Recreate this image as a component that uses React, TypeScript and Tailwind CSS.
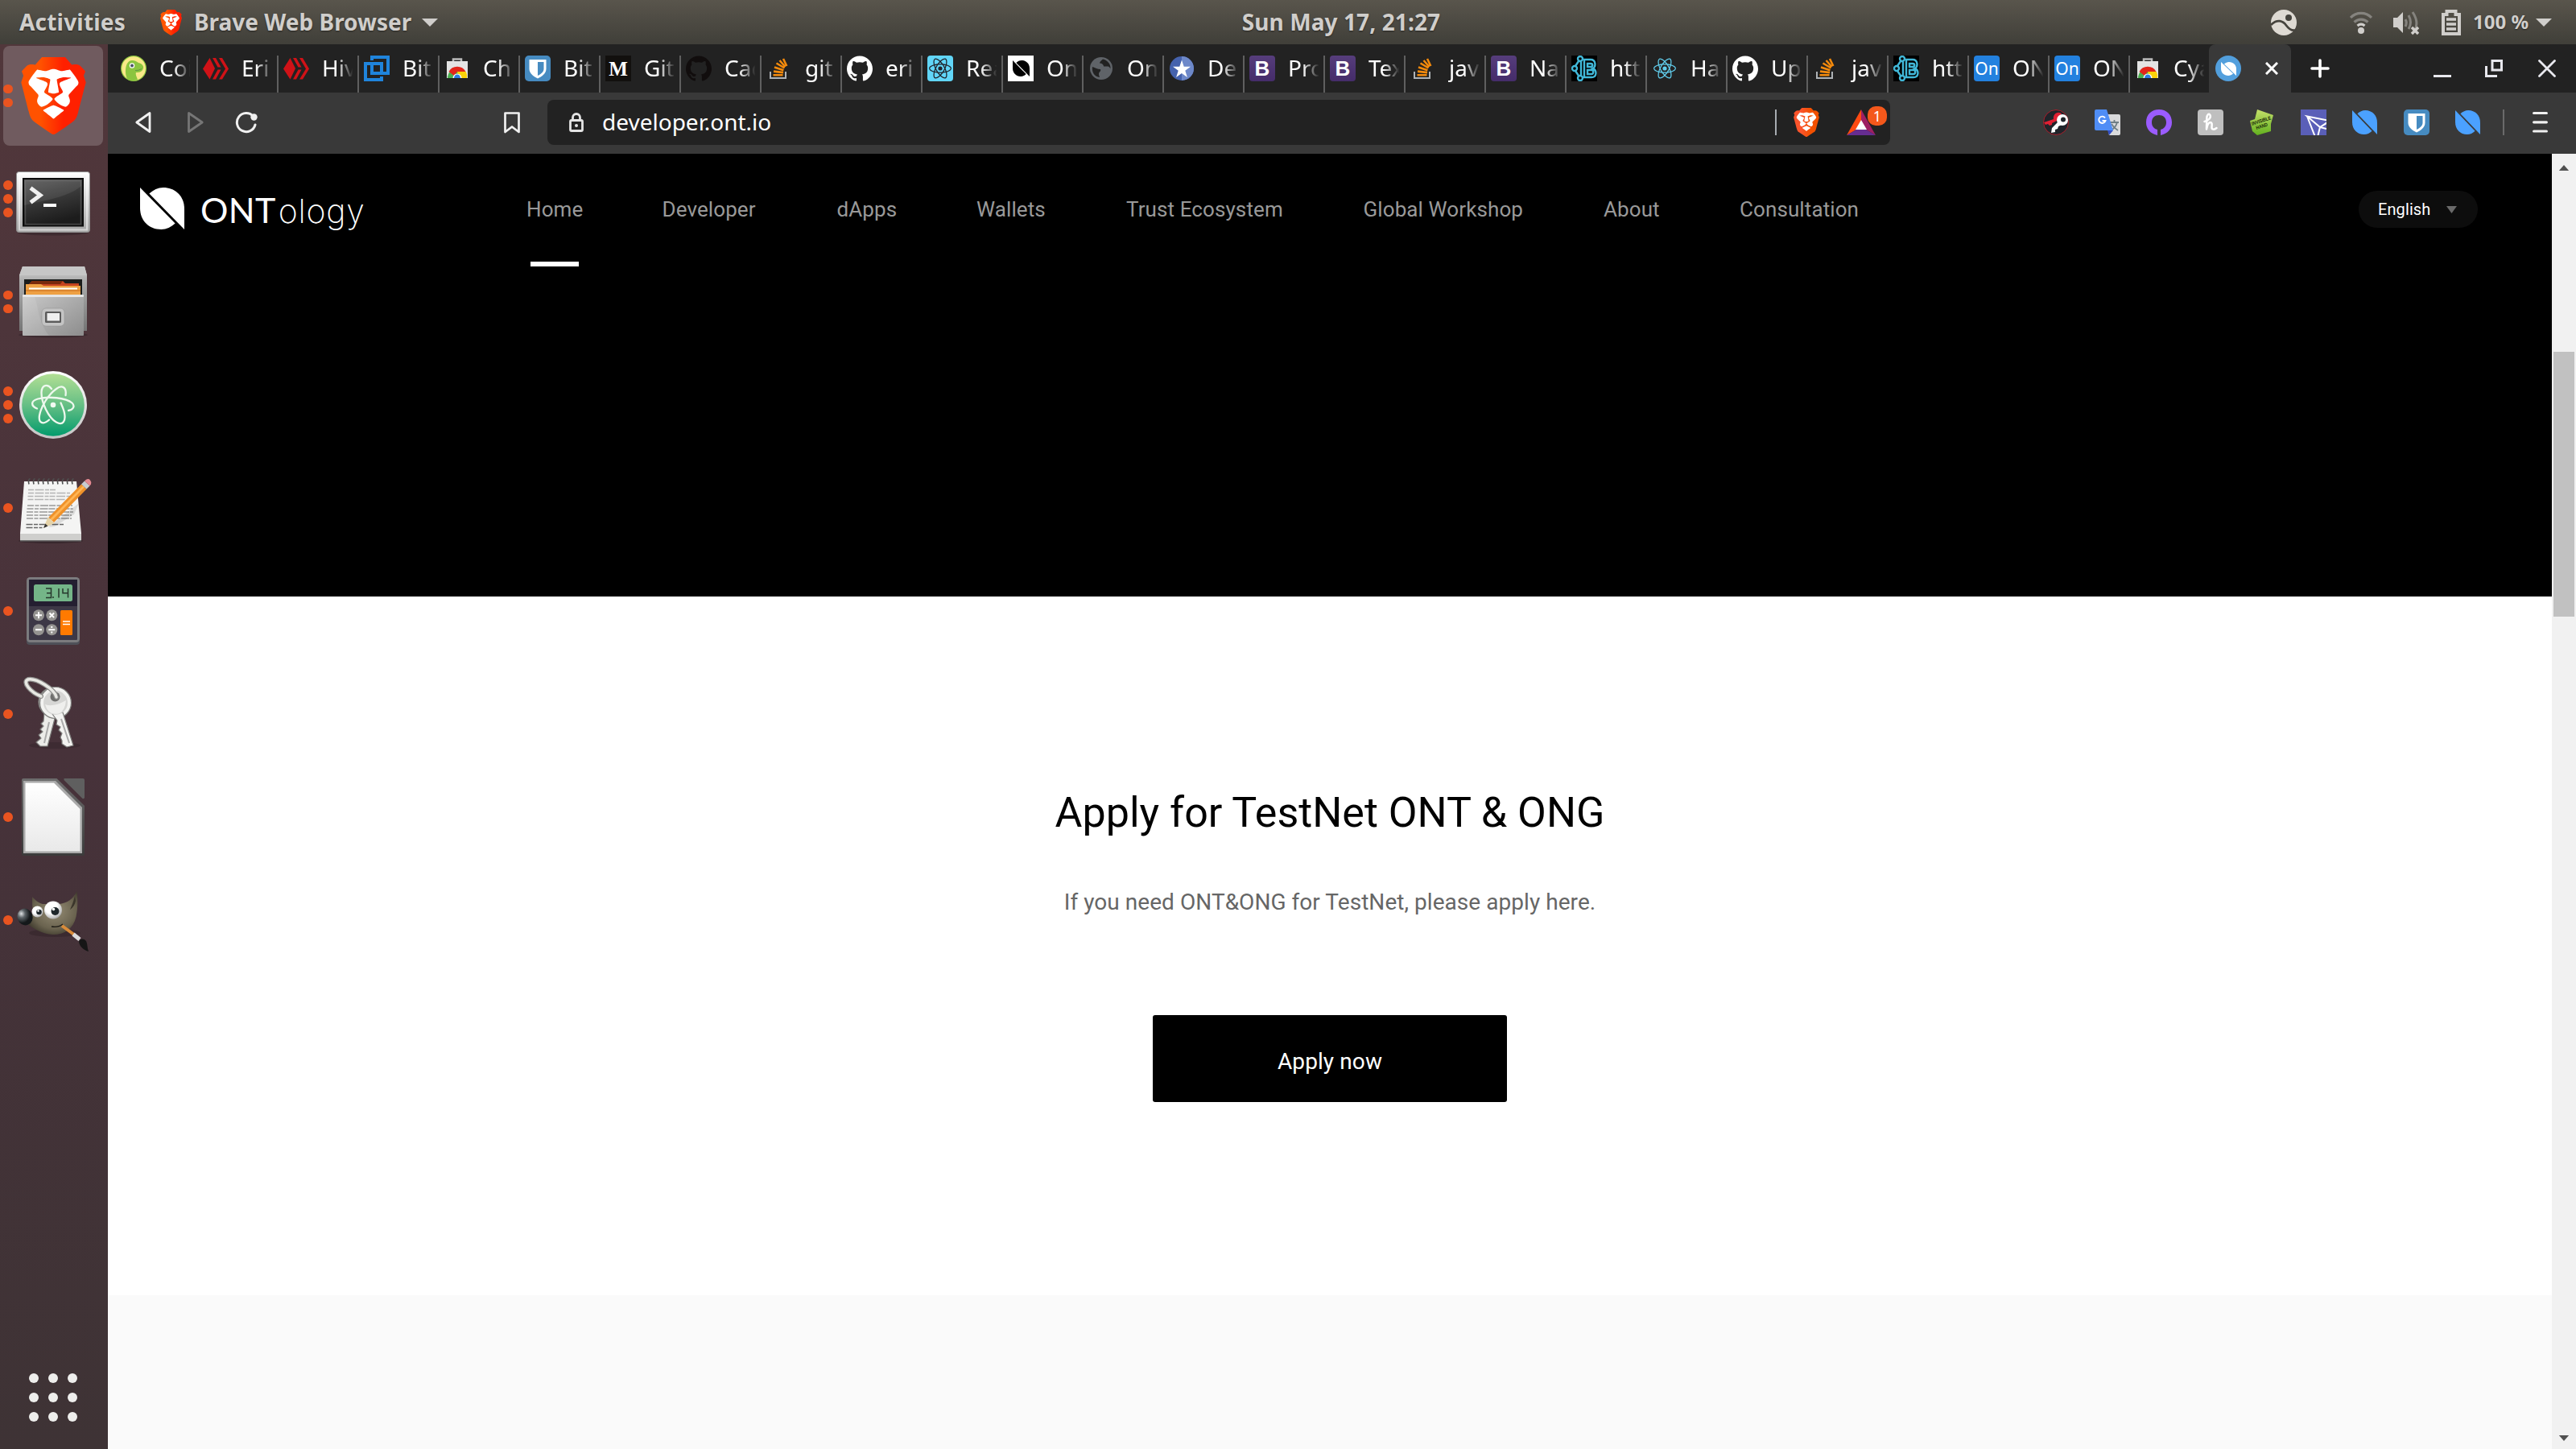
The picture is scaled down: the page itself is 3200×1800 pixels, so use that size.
import type { ReactNode } from 'react';
import { SiGithub, SiReact } from 'react-icons/si';

/* ---------- shared marks ---------- */

const BRAVE_BODY =
  'M15.68 0l2.096 2.38s1.84-.512 2.709.358c.868.87 1.584 1.638 1.584 1.638l-.562 1.381.715 2.047s-2.104 7.98-2.35 8.955c-.486 1.919-.818 2.66-2.198 3.633-1.38.972-3.884 2.66-4.293 2.916-.409.256-.92.692-1.38.692-.46 0-.97-.436-1.38-.692a185.796 185.796 0 01-4.293-2.916c-1.38-.973-1.712-1.714-2.197-3.633-.247-.975-2.351-8.955-2.351-8.955l.715-2.047-.562-1.381s.716-.768 1.585-1.638c.868-.87 2.708-.358 2.708-.358L8.321 0h7.36z';
const BRAVE_FACE =
  'M12.001 14.936c-.14 0-1.038.317-1.758.69-.72.373-1.242.637-1.409.742-.167.104-.065.301.087.409.152.107 2.194 1.69 2.393 1.866.198.175.489.464.687.464.198 0 .49-.29.688-.464.198-.175 2.24-1.759 2.392-1.866.152-.108.254-.305.087-.41-.167-.104-.689-.368-1.41-.741-.72-.373-1.617-.69-1.757-.69zm0-11.278s-.409.001-1.022.206-1.278.46-1.584.46c-.307 0-2.581-.434-2.581-.434S4.119 7.152 4.119 7.849c0 .697.339.881.68 1.243l2.02 2.149c.192.203.59.511.356 1.066-.235.555-.58 1.26-.196 1.977.384.716 1.042 1.194 1.464 1.115.421-.08 1.412-.598 1.776-.834.364-.237 1.518-1.19 1.518-1.554 0-.365-1.193-1.02-1.413-1.168-.22-.15-1.226-.725-1.247-.95-.02-.227-.012-.293.284-.851.297-.559.831-1.304.742-1.8-.089-.495-.95-.753-1.565-.986-.615-.232-1.799-.671-1.947-.74-.148-.068-.11-.133.339-.175.448-.043 1.719-.212 2.292-.052.573.16 1.552.403 1.632.532.079.13.149.134.067.579-.081.445-.5 2.581-.541 2.96-.04.38-.12.63.288.724.409.094 1.097.256 1.333.256s.924-.162 1.333-.256c.408-.093.329-.344.288-.723-.04-.38-.46-2.516-.541-2.961-.082-.445-.012-.45.067-.579.08-.129 1.059-.372 1.632-.532.573-.16 1.845.009 2.292.052.449.042.487.107.339.175-.148.069-1.332.508-1.947.74-.615.233-1.476.49-1.565.986-.09.496.445 1.241.742 1.8.297.558.304.624.284.85-.02.226-1.026.802-1.247.95-.22.15-1.413.804-1.413 1.169 0 .364 1.154 1.317 1.518 1.554.364.236 1.355.755 1.776.834.422.079 1.08-.4 1.464-1.115.384-.716.039-1.422-.195-1.977-.235-.555.163-.863.355-1.066l2.02-2.149c.341-.362.68-.546.68-1.243 0-.697-2.695-3.96-2.695-3.96s-2.274.436-2.58.436c-.307 0-.972-.256-1.585-.461-.613-.205-1.022-.206-1.022-.206z';

function BraveLion({ id, from, to, className }: { id: string; from: string; to: string; className: string }) {
  return (
    <svg viewBox="1.7 0 20.6 24" preserveAspectRatio="none" className={className}>
      <defs>
        <linearGradient id={id} x1="0" x2="1" y1="0" y2="0">
          <stop offset="0.3" stopColor={from} />
          <stop offset="0.65" stopColor={to} />
        </linearGradient>
      </defs>
      <path d={BRAVE_BODY} fill={`url(#${id})`} />
      <path d={BRAVE_FACE} fill="#fff" />
    </svg>
  );
}

function OntMark({ className }: { className: string }) {
  return (
    <svg viewBox="0 0 55.5 52" preserveAspectRatio="none" className={className} fill="currentColor">
      <path d="M0 0 44 44.5C39 49 33 52 26.5 52 11 52 0 41 0 25.500Z" />
      <path d="M11.500 7.500C16.500 3 22.500 0 29 0 44.500 0 55.500 11 55.500 26.500V52Z" />
    </svg>
  );
}

/* ---------- favicons ---------- */

const Gecko = () => (
  <svg viewBox="0 0 32 32" className="size-8">
    <circle cx="16" cy="16" r="16" fill="#8bc53f" />
    <circle cx="16" cy="16" r="14.800" fill="#f9e988" />
    <path d="M9 30C4 24 5 6 14 6c4 0 6 1.500 8 3 5 1 8 5 5 9-2 3-6 3-8 3-1 2 1 6 2 9-4 1.500-9 1.500-12 0Z" fill="#8bc53f" />
    <circle cx="14" cy="12.500" r="3.200" fill="#fff" />
    <circle cx="14" cy="12.500" r="2" fill="#4b5563" />
    <path d="M18 18.500q4 .5 8-2" stroke="#5e9641" strokeWidth="1" fill="none" />
  </svg>
);
const Hive = () => (
  <svg viewBox="0 0 32 32" className="size-8" fill="#d01217">
    <path d="M8.500 3 15 16 8.500 29.500 0 16.500Z" />
    <path d="M12 3h4l6.500 11.500h-4Z M18.500 17.500h4L16 29.500h-4Z" />
    <path d="M20 3h4l8 13.500-8 13h-4l8-13Z" />
  </svg>
);
const Bitmask = () => (
  <svg viewBox="0 0 32 32" className="size-8" fill="none" stroke="#1f84dc" strokeWidth="4">
    <path d="M10 6V2h20v20H10v-6" />
    <path d="M22 26v4H2V10h20v6" />
    <path d="M10 10v12M22 22V10" />
  </svg>
);
const WebStore = () => (
  <svg viewBox="0 0 32 32" className="size-8">
    <path d="M11 8V4.500h10V8" fill="none" stroke="#bbb" strokeWidth="2.500" />
    <rect x="3" y="7" width="26" height="21" fill="#e4e4e4" />
    <path d="M4 28a12 12 0 0 1 24 0Z" fill="#4caf50" />
    <path d="M5.500 20a12 12 0 0 1 21 0H16l-4 5Z" fill="#e2261c" />
    <path d="M16 20h10.800A12 12 0 0 1 28 28H18Z" fill="#fcd209" />
    <path d="M10.500 28a5.500 5.500 0 0 1 11 0Z" fill="#fff" />
    <path d="M12 28a4 4.500 0 0 1 8 0Z" fill="#2f7de1" />
  </svg>
);
const Bitwarden = () => (
  <svg viewBox="0 0 32 32" className="size-8">
    <rect width="32" height="32" rx="5" fill="#468bc1" />
    <path d="M5.500 5h21v11.500c0 6-5.500 9.500-10.500 12-5-2.500-10.500-6-10.500-12Z" fill="#fff" />
    <path d="M16 8h7.500v8.500c0 4-3.800 6.500-7.500 8.500Z" fill="#468bc1" />
  </svg>
);
const Medium = () => (
  <div className="flex size-8 items-center justify-center bg-[#12100e] font-['Liberation_Serif',serif] text-[25px] leading-none font-bold text-white">M</div>
);
const GithubDark = () => <SiGithub className="size-8 text-[#110d0d]" />;
const GithubLight = () => <SiGithub className="size-8 text-white" />;
const StackOverflow = () => (
  <svg viewBox="0 0 32 32" className="size-8" fill="none">
    <path d="M5 20v8h19v-8" stroke="#aeb2b6" strokeWidth="2" />
    <g stroke="#f48a0c" strokeWidth="2.600">
      <path d="M8.500 24.300h12M9 19.600l12 1.500M10 14.600l11.400 3.700M12.500 9.500l10 6M16.500 6l7 8M21 4l4.300 9" />
    </g>
  </svg>
);
const ReactTile = () => (
  <div className="flex size-8 items-center justify-center rounded bg-[#61d6f8]">
    <SiReact className="size-7 text-[#20232a]" />
  </div>
);
const ReactPlain = () => (
  <div className="flex size-8 items-center justify-center">
    <SiReact className="size-7 text-[#61cdec]" />
  </div>
);
const OntTile = () => (
  <div className="flex size-8 items-center justify-center bg-white">
    <OntMark className="h-5 w-[21px] text-black" />
  </div>
);
const Globe = () => (
  <svg viewBox="0 0 32 32" className="size-8">
    <circle cx="16" cy="16" r="14" fill="#5f6368" />
    <path d="M5 14c4 1 6 3 10 3 1 3-2 3-2 6 0 2 1 3 1 4C8 26.500 4 21 5 14ZM18 4.500c-2 2-4 3-4 5 3 0 5 2 5 4h5c2 0 3 2 3.500 3 .5-6-4-11-9.500-12Z" fill="#222" />
  </svg>
);
const StarBadge = () => (
  <svg viewBox="0 0 32 32" className="size-8">
    <circle cx="16" cy="16" r="15" fill="#4562ad" />
    <path d="M16 1a15 15 0 0 1 0 30Z" fill="#6d88c9" />
    <path d="m16 5.500 2.700 8.200h8.300l-6.700 5 2.600 8.300-6.900-5-6.900 5 2.600-8.300-6.700-5h8.300Z" fill="#fff" />
  </svg>
);
const Bootstrap = () => (
  <div className="flex size-8 items-center justify-center rounded bg-linear-to-b from-[#563d7c] to-[#452c6a] font-['Liberation_Sans',sans-serif] text-[26px] leading-none font-bold text-white">B</div>
);
const ReactBootstrap = () => (
  <svg viewBox="0 0 32 32" className="size-8" fill="none" stroke="#41b8d8" strokeWidth="2.400">
    <rect width="32" height="32" fill="#000" stroke="none" />
    <path d="M16 5v22h9c7 0 7-9 1.500-11 4.500-2 4-11-2.500-11ZM20 10h4c3 0 3 4 0 4h-4ZM20 18h5c3 0 3 5 0 5h-5Z" />
    <circle cx="11" cy="4" r="3" />
    <circle cx="4" cy="16" r="3" />
    <circle cx="11" cy="28" r="3" />
    <path d="M9 7 5 13M5 19l4 6M12 8v16" />
  </svg>
);
const OnTile = () => (
  <div className="flex size-8 items-center justify-center rounded bg-[#2381df] font-['Noto_Sans',sans-serif] text-[21px] leading-none text-white">On</div>
);

const TABS: { label: string; icon: () => ReactNode }[] = [
  { label: 'Coi', icon: Gecko },
  { label: 'Eri', icon: Hive },
  { label: 'Hiv', icon: Hive },
  { label: 'Bit', icon: Bitmask },
  { label: 'Ch', icon: WebStore },
  { label: 'Bit', icon: Bitwarden },
  { label: 'Git', icon: Medium },
  { label: 'Cac', icon: GithubDark },
  { label: 'git', icon: StackOverflow },
  { label: 'eri', icon: GithubLight },
  { label: 'Rea', icon: ReactTile },
  { label: 'On', icon: OntTile },
  { label: 'On', icon: Globe },
  { label: 'De', icon: StarBadge },
  { label: 'Pro', icon: Bootstrap },
  { label: 'Tex', icon: Bootstrap },
  { label: 'jav', icon: StackOverflow },
  { label: 'Na', icon: Bootstrap },
  { label: 'htt', icon: ReactBootstrap },
  { label: 'Ha', icon: ReactPlain },
  { label: 'Up', icon: GithubLight },
  { label: 'jav', icon: StackOverflow },
  { label: 'htt', icon: ReactBootstrap },
  { label: 'ON', icon: OnTile },
  { label: 'ON', icon: OnTile },
  { label: 'Cya', icon: WebStore },
];

/* ---------- GNOME top bar ---------- */

function TopBar() {
  return (
    <header className="grid h-[55px] shrink-0 grid-cols-3 items-center bg-linear-to-b from-[#59554c] to-[#403f39] font-['Noto_Sans',sans-serif] text-[28px] leading-none font-bold text-[#d0cecb] [text-shadow:0_1px_2px_rgba(0,0,0,0.5)]">
      <div className="flex items-center whitespace-nowrap">
        <span className="ml-6 w-[175px] pb-[2px] tracking-[0.2px]">Activities</span>
        <BraveLion id="lion-bar" from="#ff5500" to="#ff2000" className="h-8 w-[27px]" />
        <span className="ml-[15px] w-[283px] pb-[2px]">Brave Web Browser</span>
        <svg viewBox="0 0 20 10" className="h-[10px] w-5"><path d="M0 0h20L10 10Z" fill="#d0cecb" /></svg>
      </div>
      <div className="pb-[2px] pl-[476px] tracking-[0.1px] whitespace-nowrap">Sun May 17, 21:27</div>
      <div className="flex items-center justify-end pr-[30px]">
        <svg viewBox="0 0 32 32" className="size-8">
          <circle cx="16" cy="16" r="16" fill="#dedad3" />
          <path d="M0 19C8 11 15 14 19 19.500S27 27 32 25" fill="none" stroke="#45433d" strokeWidth="2.800" />
          <circle cx="22" cy="10" r="4" fill="#45433d" />
        </svg>
        <svg viewBox="0 0 28 28" className="ml-[66px] size-7" fill="none" strokeWidth="3.200">
          <path d="M1 8c7-7.500 19-7.500 26 0M5.500 13.500c5-4.500 12-4.500 17 0" stroke="#85837e" />
          <path d="M9.500 18c3-2.500 6-2.500 9 0" stroke="#d0cecb" />
          <circle cx="14" cy="24" r="4" fill="#d0cecb" />
        </svg>
        <svg viewBox="0 0 32 32" className="ml-[26px] size-8" fill="none">
          <path d="M0 10h5l7-7v26l-7-7H0Z" fill="#d0cecb" />
          <path d="M15 12q2.500 4 0 9M19 7q5 9 0 17M24 3q8 12 3 22" stroke="#85837e" strokeWidth="3" />
          <path d="m23 22 8 8m0-8-8 8" stroke="#d0cecb" strokeWidth="3.500" />
        </svg>
        <svg viewBox="0 0 24 32" className="ml-7 h-8 w-6" fill="none">
          <path d="M2 6h4.500V2h11v4H22v24H2Z" stroke="#d0cecb" strokeWidth="4" />
          <path d="M6 12h12M6 18h12M6 24h12" stroke="#d0cecb" strokeWidth="3.500" />
        </svg>
        <span className="ml-[15px] w-[78px] pb-[2px] text-2xl leading-none whitespace-nowrap">100 %</span>
        <svg viewBox="0 0 20 10" className="h-[10px] w-5"><path d="M0 0h20L10 10Z" fill="#d0cecb" /></svg>
      </div>
    </header>
  );
}

/* ---------- dock ---------- */

function DockIcon({ children }: { children: ReactNode }) {
  return (
    <svg viewBox="18 16 96 96" className="size-24 overflow-visible">
      {children}
    </svg>
  );
}

const Terminal = () => (
  <DockIcon>
    <defs>
      <linearGradient id="t-frame" x2="0" y2="1"><stop stopColor="#fdfdfd" /><stop offset="1" stopColor="#a5a5a5" /></linearGradient>
      <linearGradient id="t-screen" x2="0.300" y2="1"><stop stopColor="#5a5a5a" /><stop offset="0.500" stopColor="#383838" /><stop offset="1" stopColor="#1c1c1c" /></linearGradient>
    </defs>
    <ellipse cx="66" cy="106" rx="44" ry="3.500" fill="#33242a" opacity="0.600" />
    <rect x="20.500" y="30.500" width="91" height="75" rx="3" fill="url(#t-frame)" stroke="#8f8f8f" />
    <rect x="24" y="33.500" width="84" height="69" fill="none" stroke="#fff" strokeOpacity="0.500" strokeWidth="2" />
    <rect x="28" y="38" width="76" height="60.500" fill="#0c0c0c" />
    <rect x="30" y="40" width="72" height="57" fill="url(#t-screen)" />
    <rect x="31.500" y="41.500" width="69" height="54" fill="none" stroke="#6d6d6d" strokeOpacity="0.500" strokeWidth="1.500" />
    <path d="M30 72C55 66 85 62 101 48V41H30Z" fill="#fff" opacity="0.080" />
    <path d="m38 50.500 12 9-12 9" fill="none" stroke="#f0f0f0" strokeWidth="5" />
    <rect x="54" y="70" width="16" height="4" fill="#fff" />
  </DockIcon>
);

const Files = () => (
  <DockIcon>
    <defs>
      <linearGradient id="f-back" x2="0" y2="1"><stop stopColor="#d5d5d5" /><stop offset="0.200" stopColor="#b0b0b0" /><stop offset="1" stopColor="#757575" /></linearGradient>
      <linearGradient id="f-front" x2="1" y2="1"><stop stopColor="#c9c9c9" /><stop offset="1" stopColor="#8d8d8d" /></linearGradient>
    </defs>
    <ellipse cx="66" cy="105" rx="43" ry="3.500" fill="#33242a" opacity="0.600" />
    <path d="M28 20h77l3 11v69H24V31Z" fill="url(#f-back)" />
    <path d="M28 20h77l3 11H24Z" fill="#c6c6c6" />
    <rect x="30" y="36" width="72" height="22" fill="#1b1d1c" />
    <path d="M36 42l4-4h38l3 3h17v15H34Z" fill="#c5431f" />
    <path d="M36 42l4-4h38l-3 4Z" fill="#7a2a0c" />
    <path d="M32 42h19l3 2h46v12H32Z" fill="#eea043" />
    <rect x="36" y="46.500" width="60" height="2" fill="#fff" />
    <path d="M32 50h68" stroke="#c96a1c" />
    <rect x="28" y="55" width="76" height="51" rx="1" fill="url(#f-front)" />
    <rect x="28" y="55" width="76" height="3" rx="1" fill="#e6e6e6" />
    <path d="M28 58h15c5 12 4 30 18 48H28Z" fill="#fff" opacity="0.100" />
    <rect x="52" y="72" width="28" height="22" rx="5" fill="#c4c4c4" stroke="#8f8f8f" strokeWidth="0.500" />
    <rect x="56" y="76" width="20" height="14" rx="1.500" fill="#5c5c5c" />
    <rect x="58.500" y="78" width="15.500" height="9.500" fill="#efefef" />
  </DockIcon>
);

const Atom = () => (
  <DockIcon>
    <defs>
      <linearGradient id="a-rim" x2="0" y2="1"><stop stopColor="#fff" /><stop offset="1" stopColor="#c4c4c4" /></linearGradient>
      <linearGradient id="a-fill" x2="0" y2="1"><stop stopColor="#b2df94" /><stop offset="0.500" stopColor="#66bf85" /><stop offset="1" stopColor="#029b6c" /></linearGradient>
    </defs>
    <circle cx="66" cy="64" r="42" fill="url(#a-rim)" />
    <circle cx="66" cy="64" r="38.800" fill="url(#a-fill)" />
    <g fill="none" stroke="#eef8ee" strokeWidth="2.300" strokeLinecap="round">
      <path d="M46 68.500C38 65 38 59 47 56.500 60 53 82 55 89.500 61.500 94 66 90 70.500 85 71" />
      <path d="M64 44C59 37.500 52 39 51.500 48 51 60 60 80 70 85.500 78 90 82 84 80 74 79 69 77.500 66 75.500 61.500" />
      <path d="M81.500 52C83 42 77 38.500 70 44 60 51 51 66 49 77 47.500 87 54 89 61 82.500" />
    </g>
    <circle cx="66" cy="64" r="3.300" fill="#f2faf2" />
  </DockIcon>
);

const Editor = () => (
  <DockIcon>
    <ellipse cx="63" cy="105" rx="40" ry="3" fill="#2c1f24" opacity="0.600" />
    <path d="M30 31h65l6 65v9H25v-9Z" fill="#f4f4f3" />
    <path d="M25 96h76v9H25Z" fill="#cfcfcd" />
    <path d="M25 104h76v1.500H25Z" fill="#6a6a6a" />
    <g fill="none" strokeWidth="1.600">
      <path stroke="#4e4e4e" d="M36 34.500q-1.500-6 1.500-7M42 34.500q-1.500-6 1.500-7M48 34.500q-1.500-6 1.500-7M54 34.500q-1.500-6 1.500-7M60 34.500q-1.500-6 1.500-7M66 34.500q-1.500-6 1.500-7M72 34.500q-1.500-6 1.500-7M78 34.500q-1.500-6 1.500-7M84 34.500q-1.500-6 1.500-7M90 34.500q-1.500-6 1.500-7" />
      <path stroke="#b4b4b4" strokeDasharray="7 1.500 11 1.500 5 1" d="M35 41.500h35M35 45.500h52M34.500 49.500h54M34.500 53.500h46" />
      <path stroke="#999" strokeDasharray="8 1.500 5 1.500 10 1" d="M34 61h56M33.500 65h57M33 69h58M33 73h56M33 77h56" />
      <path stroke="#666" strokeDasharray="8 1.500 5 1.500" d="M32.500 84.500h48M32.500 88.500h20" />
    </g>
    <path d="M60 88 98 58l-6 14-24 15Z" fill="#000" opacity="0.100" />
    <path d="M54 89l5.500-13.500 8 7.500Z" fill="#e5d3a8" />
    <path d="M54 89l2.300-5.500 3.200 3Z" fill="#333" />
    <path d="M60.500 75.500 101 34.500l6.500 6L67 82Z" fill="#f0922a" />
    <path d="M62.500 77.500 103 36.500l2 1.800L64.600 79.500Z" fill="#ffb555" />
    <path d="m101 34.500 4-4 6.500 6-4 4Z" fill="#c9ccd0" />
    <path d="m105 30.500 2-1.800q3-1.500 5 .7t1 5l-1.500 2.100Z" fill="#e58a92" />
  </DockIcon>
);

const Calculator = () => (
  <DockIcon>
    <rect x="33" y="24" width="66" height="82" rx="4" fill="#4e5058" />
    <rect x="33" y="22" width="66" height="81" rx="4.500" fill="#7b7b7e" />
    <rect x="36" y="25" width="60" height="75" rx="1" fill="#3d3846" />
    <rect x="36" y="25" width="60" height="33" fill="#241f31" />
    <rect x="42" y="31" width="48" height="21" rx="2.500" fill="#74b588" />
    <g fill="none" stroke="#26372c" strokeWidth="1.500">
      <path d="M57 36h6.500v11.500H57M58 41.800h5M66 46v2M73 36v11.500M78 36v5.800h6.500M84.500 36v11.500" />
    </g>
    <g fill="#949390">
      <circle cx="48" cy="69.300" r="7" /><circle cx="64.300" cy="69.300" r="7" />
      <circle cx="48" cy="87.300" r="7" /><circle cx="64.300" cy="87.300" r="7" />
    </g>
    <g stroke="#fff" strokeWidth="2">
      <path d="M44 69.300h8M48 65.300v8M61.500 66.500l5.600 5.600M67.100 66.500l-5.600 5.600M44 87.300h8M60.300 87.300h8M64.300 83v2M64.300 89.500v2" />
    </g>
    <rect x="75" y="63" width="15" height="31" rx="1.500" fill="#ff7a00" />
    <path d="M78 77h9M78 80.500h9" stroke="#fff" strokeWidth="1.600" />
  </DockIcon>
);

const Keys = () => (
  <DockIcon>
    <ellipse cx="68" cy="103" rx="32" ry="4" fill="#33242a" opacity="0.500" />
    <g stroke="#7d7d7b" strokeWidth="1.200" strokeLinejoin="round">
      <circle cx="66" cy="49" r="18" fill="#d2d2d0" />
      <path d="M55 62 54 73l-3 3 3 3-4 4 3 3-5 4 3 4-6 5 5 5h9l11-42Z" fill="#ecece9" />
      <circle cx="69" cy="50" r="19.500" fill="#f3f3f1" />
      <path d="m65 64 6 8-1 5 5 3-2 4 4 4-2 5 2 4 0 4 6 4 8-2L78 62Z" fill="#f3f3f1" />
    </g>
    <circle cx="69" cy="50" r="15" fill="#d6d6d4" />
    <path d="M56 52q10 4 26-5-1 12-8 16-14 4-18-11Z" fill="#efefed" />
    <path d="m61 74-6 26M76 70l10 30" stroke="#aaa" strokeWidth="2" fill="none" />
    <circle cx="68.500" cy="42.500" r="6" fill="#6f6f6d" />
    <path d="M70 43C68 33 45 19 35 21c-8 3 3 16 16 21" fill="none" stroke="#8d8d8b" strokeWidth="6" strokeLinecap="round" />
    <path d="M70 43C68 33 45 19 35 21c-8 3 3 16 16 21" fill="none" stroke="#e9e9e4" strokeWidth="3.500" strokeLinecap="round" />
  </DockIcon>
);

const LibreOffice = () => (
  <DockIcon>
    <defs>
      <linearGradient id="l-rim" x2="0" y2="1"><stop stopColor="#6c6c6c" /><stop offset="1" stopColor="#3b3b3b" /></linearGradient>
      <linearGradient id="l-page" x2="0" y2="1"><stop stopColor="#fff" /><stop offset="1" stopColor="#e9e9e9" /></linearGradient>
    </defs>
    <path d="M29 16h41.500L105 50v60q0 2-2 2H29q-2 0-2-2V18q0-2 2-2Z" fill="url(#l-rim)" />
    <path d="M29 19h40l33 33v57H29Z" fill="#a9a9a9" />
    <path d="M31.500 21.500H67L99.500 54v52.500h-68Z" fill="url(#l-page)" />
    <path d="M79.500 16H103q2 0 2 2v22q-1 2-2.500 1L79.500 18Z" fill="#5f5f5f" />
  </DockIcon>
);

const Gimp = () => (
  <DockIcon>
    <defs>
      <radialGradient id="g-head" cx="0.550" cy="0.450" r="0.600"><stop stopColor="#958c74" /><stop offset="0.700" stopColor="#6a634f" /><stop offset="1" stopColor="#413c2f" /></radialGradient>
      <radialGradient id="g-nose" cx="0.350" cy="0.250" r="0.700"><stop stopColor="#dfe3e5" /><stop offset="0.350" stopColor="#5c6367" /><stop offset="0.800" stopColor="#14181a" /></radialGradient>
      <radialGradient id="g-eye" cx="0.400" cy="0.350" r="0.700"><stop offset="0.500" stopColor="#fff" /><stop offset="1" stopColor="#a5a5a5" /></radialGradient>
    </defs>
    <ellipse cx="68" cy="80" rx="32" ry="5" fill="#2c1f24" opacity="0.400" />
    <path d="M40 35c4 4 6 7 13 9h20c10-1 18-6 22.500-16 1.500 12 1 22-1 32C91 75 80 82 66 82 52 81 42 75 33 68c2-6 7-10 8-14-1-6-1-13-1-19Z" fill="url(#g-head)" />
    <path d="M93 34c-2 8-4 12-6 17 4-3 6-6 7-11Z" fill="#3b362b" />
    <ellipse cx="31" cy="60" rx="9.500" ry="10.500" transform="rotate(-20 31 60)" fill="url(#g-nose)" />
    <circle cx="46.500" cy="53.500" r="7" fill="url(#g-eye)" />
    <circle cx="48.500" cy="54" r="3.300" fill="#1f272b" /><circle cx="47.500" cy="52.500" r="1.200" fill="#fff" />
    <circle cx="66" cy="51.500" r="11" fill="url(#g-eye)" />
    <circle cx="68.500" cy="53" r="5" fill="#1f272b" /><circle cx="66.500" cy="50.500" r="1.800" fill="#fff" />
    <path d="M64 72q8 1.500 14-3" fill="none" stroke="#1c1a14" strokeWidth="1.300" />
    <path d="m77 71 15 11" stroke="#d98b3a" strokeWidth="4" />
    <path d="m91 81.500 8 6.500" stroke="#dcdcdc" strokeWidth="5" />
    <path d="M98 91c1-4 6-5 9-1 2 4 1 8 3 13-6-2-11-6-12-12Z" fill="#161616" />
  </DockIcon>
);

const BraveDock = () => (
  <BraveLion id="lion-dock" from="#ff5200" to="#ff2000" className="mx-[7.5px] h-24 w-[81px]" />
);

const DOCK: { name: string; windows: number; icon: () => ReactNode }[] = [
  { name: 'brave', windows: 2, icon: BraveDock },
  { name: 'terminal', windows: 3, icon: Terminal },
  { name: 'files', windows: 2, icon: Files },
  { name: 'atom', windows: 3, icon: Atom },
  { name: 'editor', windows: 1, icon: Editor },
  { name: 'calculator', windows: 1, icon: Calculator },
  { name: 'keys', windows: 1, icon: Keys },
  { name: 'office', windows: 1, icon: LibreOffice },
  { name: 'gimp', windows: 1, icon: Gimp },
];

function Dock() {
  return (
    <aside className="flex w-[134px] shrink-0 flex-col bg-linear-to-b from-[#51373b] via-[#47323a] to-[#3e3335]">
      {DOCK.map(({ name, windows, icon: Icon }, i) => (
        <div key={name} className="flex h-32 items-center">
          <div className={i === 0 ? 'ml-1 flex h-[124px] w-[124px] items-center rounded-lg bg-[#705b5f]' : 'ml-1 flex h-[124px] w-[124px] items-center'}>
            <div className="flex w-[14px] flex-col gap-[5.5px]">
              {Array.from({ length: windows }, (_, d) => (
                <span key={d} className="size-[11.5px] rounded-full bg-[#e95420]" />
              ))}
            </div>
            <Icon />
          </div>
        </div>
      ))}
      <div className="mt-auto mb-[34px] ml-9 grid w-[60px] grid-cols-3 gap-3">
        {Array.from({ length: 9 }, (_, i) => (
          <span key={i} className="size-3 rounded-full bg-[#eeeeec]" />
        ))}
      </div>
    </aside>
  );
}

/* ---------- browser chrome ---------- */

function TabStrip() {
  return (
    <div className="flex h-[60px] shrink-0 bg-[#222222] font-['Noto_Sans',sans-serif] text-[28px] text-white">
      {TABS.map(({ label, icon: Icon }, i) => (
        <div key={i} className={i === 0 ? 'flex w-[112px] items-center pl-4' : 'flex w-[100px] items-center pl-[6px]'}>
          <Icon />
          <span className="ml-[15px] w-[43px] overflow-hidden pb-[2px] pl-px leading-[50px] whitespace-nowrap [mask-image:linear-gradient(to_right,black_45%,transparent_92%)]">
            {label}
          </span>
          {i < TABS.length - 1 && <span className="mt-[14px] ml-auto h-[46px] w-0.5 bg-[#5f5f5f]" />}
        </div>
      ))}
      <div className="-ml-[2px] flex w-[102px] items-center rounded-t-lg bg-[#393939] pl-2">
        <div className="flex size-8 items-center justify-center rounded-full bg-[#529fdd]">
          <OntMark className="h-[17px] w-[19px] text-white" />
        </div>
        <svg viewBox="0 0 16 16" className="ml-[30px] size-4" stroke="#fff" strokeWidth="3"><path d="m1 1 14 14M15 1 1 15" /></svg>
      </div>
      <div className="flex flex-1 items-center pl-6">
        <svg viewBox="0 0 24 24" className="size-6" stroke="#fff" strokeWidth="3.600" strokeLinecap="round"><path d="M12 2v20M2 12h20" /></svg>
        <svg viewBox="0 0 22 22" className="ml-[129px] size-[22px]" stroke="#e8e8ee" strokeWidth="3"><path d="M0 20.500h22" /></svg>
        <svg viewBox="0 0 22 22" className="ml-[42px] size-[22px]" fill="none" stroke="#e8e8ee" strokeWidth="3"><path d="M9 1.500h11.500V13H9ZM1.500 8v12.500H15" /></svg>
        <svg viewBox="0 0 22 22" className="ml-11 size-[22px]" stroke="#e8e8ee" strokeWidth="2.800" strokeLinecap="round"><path d="m1.500 1.500 19 19M20.500 1.500l-19 19" /></svg>
      </div>
    </div>
  );
}

const Translate = () => (
  <svg viewBox="0 0 32 32" className="size-8">
    <path d="M13 6h17q2 0 2 2v22q0 2-2 2H18Z" fill="#d9dadb" />
    <path d="M19 16h11M24.500 13v3M28 16q-2 7-8 10M21 18q3 5 8 8" stroke="#6f7f86" strokeWidth="1.800" fill="none" />
    <path d="M16 26h7l-5 6Z" fill="#3450c4" />
    <path d="M0 2q0-2 2-2h13l8 26H2q-2 0-2-2Z" fill="#4f8df6" />
    <path d="M13 10.500A4.200 4.200 0 1 0 13.500 14H9.500" stroke="#fff" strokeWidth="1.900" fill="none" />
  </svg>
);
const KeyCircle = () => (
  <svg viewBox="0 0 32 32" className="size-8">
    <circle cx="16" cy="16" r="15.500" fill="#20242a" stroke="#a8202c" strokeWidth="1" />
    <path d="M23 5C16 1 12 8 13 12L1 16l2 3 3-1 2 2 3-1v-2l6-3Z" fill="#e01f32" />
    <path d="m20 14-9 9-1 6 5-1v-3l3-1 1-3 6-3Z" fill="#fff" />
    <circle cx="24" cy="13" r="7" fill="#fff" />
    <circle cx="25" cy="12.500" r="3" fill="#20242a" />
  </svg>
);
const Ring = () => (
  <svg viewBox="0 0 32 32" className="size-8">
    <path d="M14 32C5 30 0 24 0 16 0 6 7 0 16 0s16 6 16 16c0 8-5 14-14 16v-7c4-1 7-4 7-9 0-6-4-9-9-9s-9 3-9 9c0 5 3 8 7 9Z" fill="#9b5cff" />
  </svg>
);
const Honey = () => (
  <div className="flex size-8 items-center justify-center rounded-[4px] bg-[#bfbfbf]">
    <svg viewBox="0 0 24 24" className="size-6" fill="none" stroke="#fff" strokeWidth="2.500" strokeLinecap="round" strokeLinejoin="round">
      <path d="M4.500 11c5-1 8.500-5 7-8s-4-.5-4.200 4L7 20.500C8 15 9.500 12 12 12s1.500 4 1.500 6.500 3 3 6 .5" />
    </svg>
  </div>
);
const InvisibleHand = () => (
  <svg viewBox="0 0 32 32" className="size-8">
    <defs><linearGradient id="ih" x2="0" y2="1"><stop stopColor="#c5df6a" /><stop offset="1" stopColor="#62b01e" /></linearGradient></defs>
    <path d="m10 0 20 7-3 11v9L10 32 4 27 1 14l6-2Z" fill="url(#ih)" />
    <g transform="rotate(-18 16 17)" fontFamily="Liberation Sans, sans-serif" fontWeight="700" fontSize="6.200" fill="#1a2a08" textAnchor="middle">
      <text x="16" y="16" textLength="25" lengthAdjust="spacingAndGlyphs">INVISIBLE</text>
      <text x="14.500" y="22.500" textLength="15" lengthAdjust="spacingAndGlyphs">HAND</text>
    </g>
  </svg>
);
const Tron = () => (
  <svg viewBox="0 0 32 32" className="size-8 overflow-hidden" fill="none" stroke="#fff" strokeWidth="2">
    <rect width="32" height="32" fill="#5a5fb8" stroke="none" />
    <path d="M8 8.500 36 14 24 22ZM8 8.500 18 34M24 22l-3 12M24 22l10-6M24 22l8 2" />
  </svg>
);
const OntBlue = () => <OntMark className="mr-px h-[30px] w-[31px] text-[#4ba1ff]" />;

const EXTENSIONS = [KeyCircle, Translate, Ring, Honey, InvisibleHand, Tron, OntBlue, Bitwarden, OntBlue];

function Toolbar() {
  return (
    <div className="flex h-[76px] shrink-0 items-center bg-[#393939] pb-[2px] font-['Noto_Sans',sans-serif] text-[28px] text-white">
      <svg viewBox="0 0 20 26" className="ml-[34px] h-[26px] w-5" fill="none" stroke="#f0f0f0" strokeWidth="2.800" strokeLinejoin="round"><path d="M18 1.500v23L1.800 13Z" /></svg>
      <svg viewBox="0 0 20 26" className="ml-[45px] h-[26px] w-5" fill="none" stroke="#767676" strokeWidth="2.800" strokeLinejoin="round"><path d="M1.500 1.500v23L18.200 13Z" /></svg>
      <svg viewBox="0 0 28 28" className="ml-[39px] size-7" fill="none" stroke="#f0f0f0" strokeWidth="3">
        <path d="M22.500 6.500A11.500 11.500 0 1 0 25 17" strokeLinecap="round" />
        <circle cx="23.500" cy="7.500" r="4.200" fill="#f0f0f0" stroke="none" />
      </svg>
      <svg viewBox="0 0 20 27" className="ml-[306px] h-[27px] w-5" fill="none" stroke="#f0f0f0" strokeWidth="2.700" strokeLinejoin="round"><path d="M1.500 1.500h17V25L10 18.500 1.500 25Z" /></svg>

      <div className="ml-[34px] flex h-14 w-[1668px] items-center rounded-lg bg-[#222222]">
        <svg viewBox="0 0 18 24" className="ml-[27px] h-6 w-[18px]" fill="none" stroke="#e4e4e4" strokeWidth="2.800">
          <rect x="1.500" y="9.500" width="15" height="13" rx="1.500" />
          <path d="M4.500 9V6a4.500 4.500 0 0 1 9 0v3" />
          <circle cx="9" cy="16" r="2" fill="#e4e4e4" stroke="none" />
        </svg>
        <span className="ml-[23px] pb-[3px] leading-none">developer.ont.io</span>
        <span className="mr-[21px] ml-auto h-8 w-0.5 bg-[#a7acb1]" />
        <BraveLion id="lion-url" from="#fb542b" to="#f25000" className="h-9 w-8" />
        <div className="relative mr-[18px] ml-[34px] h-8 w-9">
          <svg viewBox="0 0 36 32" className="h-8 w-9">
            <path d="M18 0 0 32l12-7 6-11Z" fill="#ff4a12" />
            <path d="m18 0 18 32-12-7-6-11Z" fill="#9e1f63" />
            <path d="M0 32h36l-12-7H12Z" fill="#662d91" />
            <path d="m18 13 7 12H11Z" fill="#fff" />
          </svg>
          <span className="absolute -top-1 left-[26px] flex h-6 w-6 items-center justify-center rounded-[10px] bg-[#f4581b] text-[18px] leading-none">1</span>
        </div>
      </div>

      <div className="ml-[190px] flex items-center gap-8">
        {EXTENSIONS.map((Ext, i) => (
          <Ext key={i} />
        ))}
      </div>
      <span className="ml-[27px] h-8 w-0.5 bg-[#6a6a6a]" />
      <svg viewBox="0 0 19 30" className="ml-[35px] h-[30px] w-[19px]" stroke="#f0f0f0" strokeWidth="3.200" strokeLinecap="round"><path d="M1.600 3.500h15.800M1.600 14.800h15.800M1.600 26h15.800" /></svg>
    </div>
  );
}

/* ---------- page ---------- */

const NAV = [
  { label: 'Home', box: 'w-[168.5px]' },
  { label: 'Developer', box: 'w-[217px]' },
  { label: 'dApps', box: 'w-[173.5px]' },
  { label: 'Wallets', box: 'w-[186px]' },
  { label: 'Trust Ecosystem', box: 'w-[294.5px]' },
  { label: 'Global Workshop', box: 'w-[298.5px]' },
  { label: 'About', box: 'w-[169px]' },
  { label: 'Consultation', box: 'w-[160px]' },
];

function Page() {
  return (
    <main className="flex min-w-0 flex-1 flex-col bg-white font-['Roboto',sans-serif]">
      <section className="h-[550px] bg-black">
        <div className="flex h-[138px] items-center">
          <OntMark className="mt-[-2px] ml-10 h-[52px] w-[55px] text-white" />
          <div className="ml-5 flex w-[405px] items-baseline pt-[3px] leading-[54px] whitespace-nowrap text-white">
            <span className="font-['Lato',sans-serif] text-[43px] tracking-[0.4px]">ONT</span>
            <span className="ml-[3px] font-['Inter',sans-serif] text-[41px] font-extralight tracking-[0.7px]">ology</span>
          </div>
          <nav className="flex h-full text-[26px] tracking-[0.1px] text-[#999999]">
            {NAV.map(({ label, box }, i) => (
              <div key={label} className={box}>
                <div className="relative inline-flex h-full items-center justify-center whitespace-nowrap">
                  {label}
                  {i === 0 && <span className="absolute top-[134px] h-1.5 w-[60px] bg-white" />}
                </div>
              </div>
            ))}
          </nav>
          <div className="mr-[92px] ml-auto flex h-[46px] w-[148px] items-center rounded-full bg-[#0d0d0d] pl-6 text-xl tracking-[0.1px] text-white">
            English
            <svg viewBox="0 0 13 9" className="ml-5 h-[9px] w-[13px]"><path d="M0 0h13L6.500 9Z" fill="#6a6a6a" /></svg>
          </div>
        </div>
      </section>
      <section className="flex h-[868px] flex-col items-center pt-[239px]">
        <h1 className="text-[52px] leading-[60px] text-black">Apply for TestNet ONT &amp; ONG</h1>
        <p className="mt-[65px] text-[28px] leading-8 tracking-[0.05px] text-[#666666]">If you need ONT&amp;ONG for TestNet, please apply here.</p>
        <button className="mt-[124px] h-[108px] w-[440px] rounded-[3px] bg-black pt-[7px] text-[28px] tracking-[0.1px] text-white">Apply now</button>
      </section>
      <section className="flex-1 bg-[#fafafa]" />
    </main>
  );
}

function Scrollbar() {
  return (
    <div className="flex w-[30px] shrink-0 flex-col items-center bg-[#f1f1f1]">
      <svg viewBox="0 0 14 8" className="mt-[14px] h-[7px] w-[14px]"><path d="M7 0 14 8H0Z" fill="#505050" /></svg>
      <div className="mt-[225px] h-[329px] w-[26px] bg-[#c1c1c1]" />
      <svg viewBox="0 0 14 8" className="mt-auto mb-[10px] h-[7px] w-[14px]"><path d="M0 0h14L7 8Z" fill="#505050" /></svg>
    </div>
  );
}

export default function App() {
  return (
    <div className="flex h-[1800px] w-[3200px] flex-col overflow-hidden">
      <TopBar />
      <div className="flex min-h-0 flex-1">
        <Dock />
        <div className="flex min-w-0 flex-1 flex-col">
          <TabStrip />
          <Toolbar />
          <div className="flex min-h-0 flex-1">
            <Page />
            <Scrollbar />
          </div>
        </div>
      </div>
    </div>
  );
}
